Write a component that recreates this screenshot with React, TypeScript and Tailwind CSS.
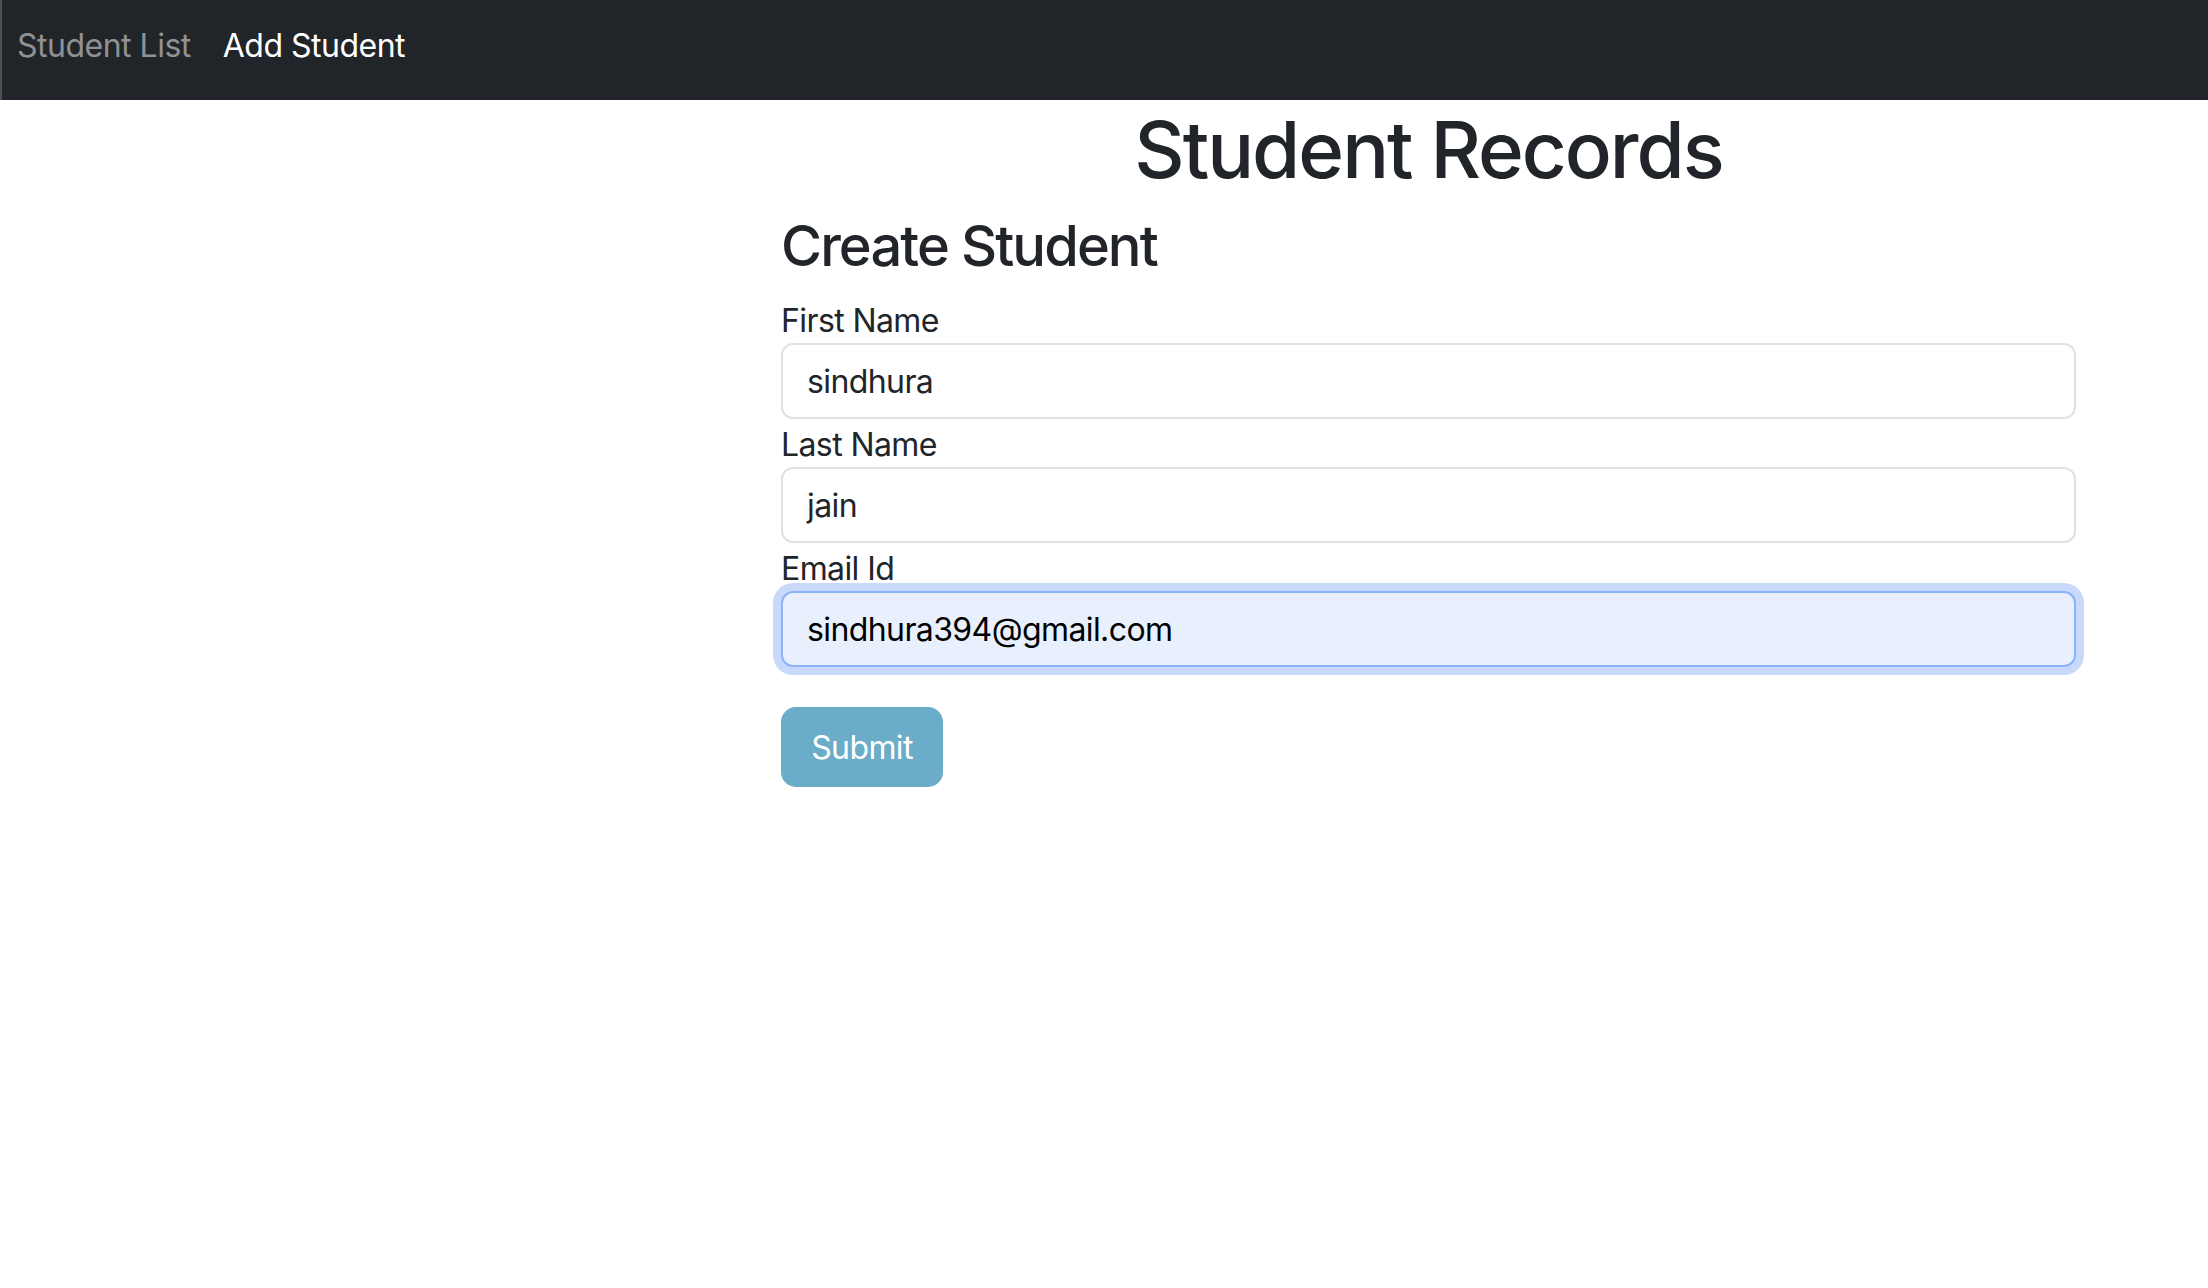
import React from "react";

const font = { fontFamily: 'Inter, "Noto Sans", sans-serif' };

export default function App() {
  return (
    <div className="min-h-[1288px] w-[2208px] bg-white text-[#212529] tracking-[-0.6px]" style={font}>
      <nav className="flex h-[100px] w-full items-start border-l-2 border-[#4b4e52] bg-[#212529] pl-[15px] pt-[22px]">
        <div className="flex gap-[32px] text-[32px] leading-[48px] tracking-[-0.5px]">
          <a className="text-[#8f9194]">Student List</a>
          <a className="text-white">Add Student</a>
        </div>
      </nav>
      <div className="ml-[781px] flex w-[1295px] flex-col">
        <h1 className="mt-[3px] mb-[15px] text-center text-[78px] font-medium leading-[94px] tracking-[-2px]">Student Records</h1>
        <h2 className="mb-[15px] text-[56px] font-medium leading-[68px] tracking-[-1.9px]">Create Student</h2>
        <form className="flex flex-col">
          <label className="block pt-[3px] text-[32px] leading-[45px]">First Name</label>
          <div className="flex h-[76px] items-center rounded-[12px] border-2 border-[#dee2e6] bg-white px-[24px] pt-[2px] text-[32px]">
            sindhura
          </div>
          <label className="block pt-[3px] text-[32px] leading-[45px]">Last Name</label>
          <div className="flex h-[76px] items-center rounded-[12px] border-2 border-[#dee2e6] bg-white px-[24px] pt-[2px] text-[32px]">
            jain
          </div>
          <label className="block pt-[3px] text-[32px] leading-[45px]">Email Id</label>
          <div className="flex h-[76px] items-center rounded-[12px] border-2 border-[#8ab4f8] bg-[#e8f0fe] px-[24px] pt-[2px] text-[32px] text-black shadow-[0_0_0_8px_#c9d9fb]">
            sindhura394@gmail.com
          </div>
          <button
            type="button"
            className="mt-[40px] flex h-[80px] w-[162px] items-center justify-center rounded-[15px] bg-[#6badc9] pt-[2px] text-[32px] text-white"
          >
            Submit
          </button>
        </form>
      </div>
    </div>
  );
}
